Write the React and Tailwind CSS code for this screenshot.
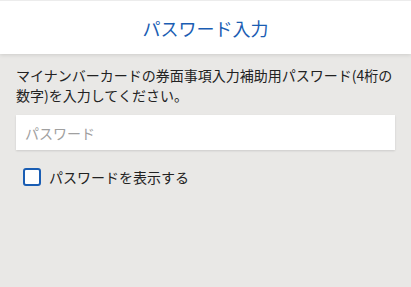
import { useState } from "react";

const FONT = { fontFamily: '"Noto Sans CJK JP", "Noto Sans", sans-serif' };

export default function App() {
  const [show, setShow] = useState(false);
  const [value, setValue] = useState("");

  return (
    <div className="min-h-[287px] bg-[#e9e8e6]" style={FONT}>
      <header className="flex h-[54px] items-center justify-center border-t border-[#ececec] bg-white shadow-[0_1px_4px_rgba(0,0,0,0.12)]">
        <h1 className="text-[18px] font-normal leading-none text-[#1a5db3]">パスワード入力</h1>
      </header>

      <main className="px-4 pt-[11px]">
        <p className="text-[14px] leading-[20px] text-[#222]">
          マイナンバーカードの券面事項入力補助用パスワード(4桁の数字)を入力してください。
        </p>

        <input
          type={show ? "text" : "password"}
          value={value}
          onChange={(e) => setValue(e.target.value)}
          placeholder="パスワード"
          className="mt-[10px] block h-[35px] w-full bg-white px-[9px] text-[14px] text-[#222] shadow-[0_1px_2px_rgba(0,0,0,0.12)] outline-none placeholder:text-[#a0a0a0]"
        />

        <label className="mt-[18px] ml-[7px] flex cursor-pointer items-center gap-[8px]">
          <input
            type="checkbox"
            checked={show}
            onChange={(e) => setShow(e.target.checked)}
            className="peer sr-only"
          />
          <span className="grid h-[18px] w-[18px] place-items-center rounded-[3px] border-2 border-[#1a5db3] bg-white">
            {show && (
              <svg viewBox="0 0 12 12" className="h-3 w-3" fill="none" stroke="#1a5db3" strokeWidth="2">
                <path d="M2 6.5l2.5 2.5L10 3" />
              </svg>
            )}
          </span>
          <span className="text-[14px] leading-none text-[#222]">パスワードを表示する</span>
        </label>
      </main>
    </div>
  );
}
